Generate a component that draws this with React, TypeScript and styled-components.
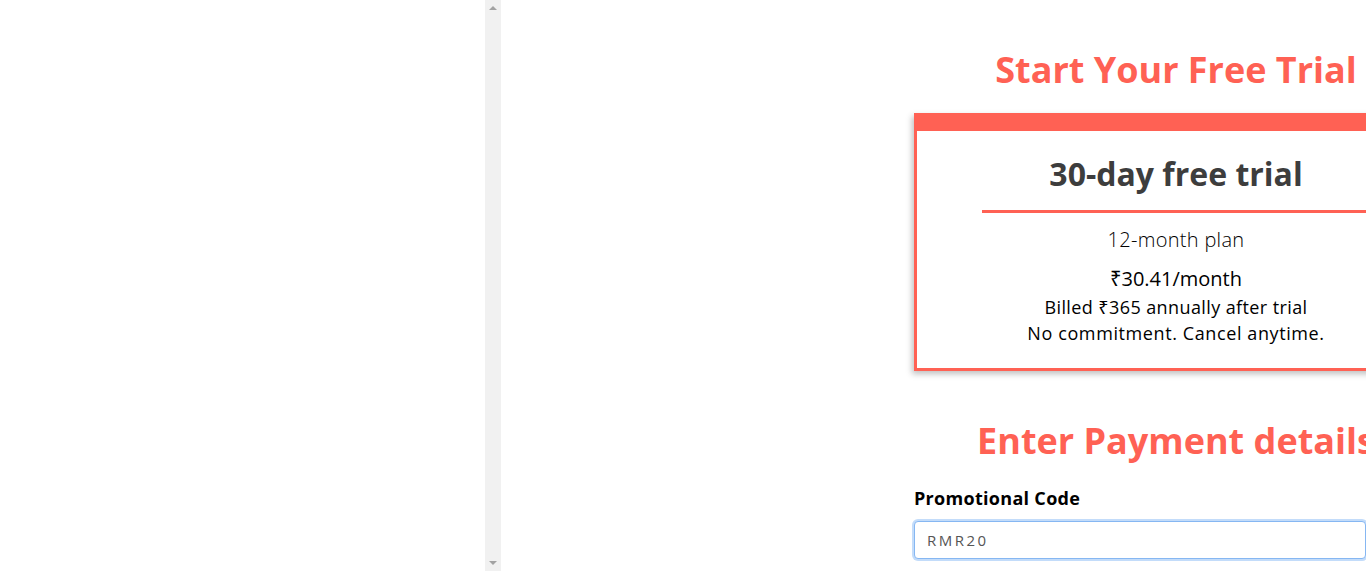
import React from "react";
import styled, { createGlobalStyle } from "styled-components";

const GlobalStyle = createGlobalStyle`
  html, body {
    margin: 0;
    padding: 0;
    overflow: hidden;
    background: #ffffff;
  }
  body {
    font-family: "Open Sans", "Noto Sans", sans-serif;
  }
`;

const coral = "#ff6154";

const Page = styled.div`
  display: flex;
  width: 1366px;
  height: 571px;
  overflow: hidden;
`;

const LeftPane = styled.div`
  width: 485px;
  flex-shrink: 0;
  background: #ffffff;
`;

const ScrollTrack = styled.div`
  width: 16px;
  flex-shrink: 0;
  background: #f1f1f1;
  display: flex;
  flex-direction: column;
  justify-content: space-between;
  align-items: center;
  padding: 6px 0;
  box-sizing: border-box;
`;

const Arrow = styled.div<{ $down?: boolean }>`
  width: 0;
  height: 0;
  border-left: 4px solid transparent;
  border-right: 4px solid transparent;
  ${(p) =>
    p.$down
      ? `border-top: 4px solid #a3a3a3;`
      : `border-bottom: 4px solid #a3a3a3;`}
`;

const Main = styled.div`
  flex: 1;
  display: flex;
  padding-left: 413px;
  min-width: 0;
`;

const Column = styled.div`
  width: 524px;
  flex-shrink: 0;
  display: flex;
  flex-direction: column;
  padding-top: 47px;
`;

const Heading = styled.h1<{ $mt?: number }>`
  margin: ${(p) => p.$mt ?? 0}px 0 0;
  font-size: 36px;
  line-height: 46px;
  font-weight: 700;
  color: ${coral};
  text-align: center;
  white-space: nowrap;
`;

const Card = styled.div`
  margin-top: 20px;
  border: 3px solid ${coral};
  border-top-width: 18px;
  box-shadow: -2px 3px 6px rgba(0, 0, 0, 0.25);
  background: #fff;
  display: flex;
  flex-direction: column;
  align-items: center;
  padding: 23px 0 22px;
`;

const CardTitle = styled.h2`
  margin: 0;
  font-size: 32px;
  line-height: 40px;
  font-weight: 700;
  color: #3d3d3d;
`;

const Divider = styled.div`
  align-self: stretch;
  margin: 16px 65px 0;
  height: 3px;
  background: ${coral};
`;

const PlanLine = styled.p<{
  $size: number;
  $weight?: number;
  $mt?: number;
  $lh: number;
  $ls?: number;
}>`
  margin: ${(p) => p.$mt ?? 0}px 0 0;
  font-size: ${(p) => p.$size}px;
  font-weight: ${(p) => p.$weight ?? 400};
  line-height: ${(p) => p.$lh}px;
  letter-spacing: ${(p) => p.$ls ?? 0}px;
  color: #000;
`;

const Label = styled.label`
  margin-top: 22px;
  font-size: 18px;
  line-height: 24px;
  font-weight: 700;
  letter-spacing: 0.3px;
  color: #000;
`;

const Input = styled.input`
  margin-top: 11px;
  width: 452px;
  height: 38px;
  box-sizing: border-box;
  border: 1px solid #86b7f2;
  border-radius: 4px;
  box-shadow: 0 0 0 2px #c3dcfa;
  padding: 0 12px;
  font-family: "Open Sans", sans-serif;
  font-size: 15px;
  letter-spacing: 2.5px;
  color: #555;
  outline: none;
`;

export default function App() {
  return (
    <>
      <GlobalStyle />
      <Page>
        <LeftPane />
        <ScrollTrack>
          <Arrow />
          <Arrow $down />
        </ScrollTrack>
        <Main>
          <Column>
            <Heading>Start Your Free Trial</Heading>
            <Card>
              <CardTitle>30-day free trial</CardTitle>
              <Divider />
              <PlanLine $size={20} $weight={300} $ls={0.3} $lh={30} $mt={12}>
                12-month plan
              </PlanLine>
              <PlanLine $size={20} $lh={30} $mt={9}>
                ₹30.41/month
              </PlanLine>
              <PlanLine $size={18} $ls={0.4} $lh={26}>
                Billed ₹365 annually after trial
              </PlanLine>
              <PlanLine $size={18} $ls={0.6} $lh={26}>
                No commitment. Cancel anytime.
              </PlanLine>
            </Card>
            <Heading $mt={47}>Enter Payment details</Heading>
            <Label>Promotional Code</Label>
            <Input defaultValue="RMR20" />
          </Column>
        </Main>
      </Page>
    </>
  );
}
